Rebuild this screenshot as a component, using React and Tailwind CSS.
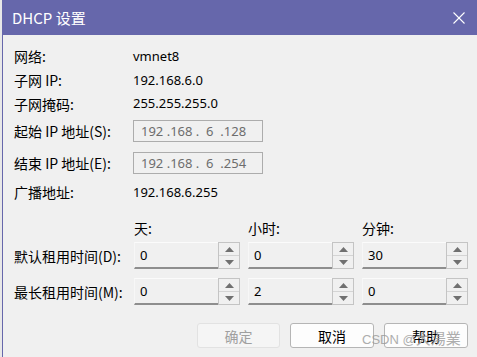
import React from "react";

const cjk = { fontFamily: '"Noto Sans CJK SC", "Noto Sans", sans-serif' };
const num = { fontFamily: '"Noto Sans", "Liberation Sans", sans-serif' };

function InfoRow({ label, value, h }) {
  return (
    <div className={`flex items-center ${h}`}>
      <div className="w-[119px] text-[14px] text-black leading-none" style={cjk}>{label}</div>
      <div className="text-[13px] text-black leading-none" style={num}>{value}</div>
    </div>
  );
}

function IpBox({ last }) {
  return (
    <div className="w-[130px] h-[22px] border border-[#acacac] bg-[#f0f0f0] flex items-center pl-[7px] text-[13px] text-[#6d6d6d] leading-none" style={num}>
      <span className="whitespace-pre">{"192 .168 .  6  ." + last}</span>
    </div>
  );
}

function Arrow({ up }) {
  return (
    <svg width="9" height="5" viewBox="0 0 9 5">
      {up ? <polygon points="0,5 9,5 4.5,0" fill="#707070" /> : <polygon points="0,0 9,0 4.5,5" fill="#707070" />}
    </svg>
  );
}

function Spin({ value }) {
  return (
    <div className="w-[106px] h-[27px] flex">
      <div className="flex-1 bg-[#f0f0f0] border-t border-l border-t-[#fbfbfb] border-l-[#f7f7f7] border-b-2 border-b-[#8e8e8e] flex items-center pl-[5px] text-[13px] text-black leading-none" style={num}>
        {value}
      </div>
      <div className="w-[22px] border border-[#c4c4c4] flex flex-col bg-[#f0f0f0]">
        <div className="flex-1 flex items-center justify-center border-b border-[#d4d4d4]"><Arrow up /></div>
        <div className="flex-1 flex items-center justify-center"><Arrow /></div>
      </div>
    </div>
  );
}

function SpinRow({ label, values }) {
  return (
    <div className="flex items-center h-[27px]">
      <div className="w-[120px] text-[14px] text-black leading-none whitespace-nowrap" style={cjk}>{label}</div>
      <div className="flex gap-[8px]">
        {values.map((v, i) => <Spin key={i} value={v} />)}
      </div>
    </div>
  );
}

export default function App() {
  return (
    <div className="w-[477px] h-[357px] flex bg-white overflow-hidden relative">
      <div className="w-[2px] bg-[#e8e8e8]" />
      <div className="flex-1 flex flex-col border-l border-[#6667ab] bg-[#f0f0f0]">
        <div className="h-[35px] bg-[#6667ab] flex items-center pl-[9px] pr-[12px] justify-between">
          <span className="text-white text-[15px] leading-none" style={cjk}>DHCP 设置</span>
          <svg width="12" height="12" viewBox="0 0 12 12">
            <line x1="0.5" y1="0.5" x2="11.5" y2="11.5" stroke="white" strokeWidth="1.1" />
            <line x1="11.5" y1="0.5" x2="0.5" y2="11.5" stroke="white" strokeWidth="1.1" />
          </svg>
        </div>
        <div className="flex flex-col pl-[11px] pt-[9px]">
          <InfoRow label="网络:" value="vmnet8" h="h-[24px]" />
          <InfoRow label="子网 IP:" value="192.168.6.0" h="h-[24px]" />
          <InfoRow label="子网掩码:" value="255.255.255.0" h="h-[23px]" />
          <div className="flex items-center h-[32px]">
            <div className="w-[119px] text-[14px] text-black leading-none whitespace-nowrap" style={cjk}>起始 IP 地址(S):</div>
            <IpBox last="128" />
          </div>
          <div className="flex items-center h-[32px]">
            <div className="w-[119px] text-[14px] text-black leading-none whitespace-nowrap" style={cjk}>结束 IP 地址(E):</div>
            <IpBox last="254" />
          </div>
          <InfoRow label="广播地址:" value="192.168.6.255" h="h-[26px]" />
          <div className="flex items-center h-[22px] mt-[12px] text-[14px] text-black leading-none" style={cjk}>
            <div className="w-[120px]" />
            <div className="w-[114px]">天:</div>
            <div className="w-[114px]">小时:</div>
            <div>分钟:</div>
          </div>
          <div className="mt-[3px]">
            <SpinRow label="默认租用时间(D):" values={["0", "0", "30"]} />
          </div>
          <div className="mt-[9px]">
            <SpinRow label="最长租用时间(M):" values={["0", "2", "0"]} />
          </div>
          <div className="flex justify-end gap-[10px] mt-[18px] pr-[9px]">
            <button className="w-[83px] h-[25px] rounded-[3px] border border-[#e2e2e2] bg-[#f5f5f5] text-[14px] text-[#a0a0a0] leading-none" style={cjk}>确定</button>
            <button className="w-[84px] h-[25px] rounded-[3px] border border-[#b5b5b5] bg-[#fdfdfd] text-[14px] text-black leading-none" style={cjk}>取消</button>
            <button className="w-[84px] h-[25px] rounded-[3px] border border-[#b5b5b5] bg-[#fdfdfd] text-[14px] text-black leading-none" style={cjk}>帮助</button>
          </div>
        </div>
      </div>
      <div className="absolute left-[362px] top-[330px] text-[15px] leading-none text-[#9a9a9a] opacity-80 whitespace-nowrap" style={cjk}>
        <span className="text-[13px]" style={{ fontFamily: '"Liberation Sans", sans-serif' }}>CSDN @</span>大湯業
      </div>
    </div>
  );
}
